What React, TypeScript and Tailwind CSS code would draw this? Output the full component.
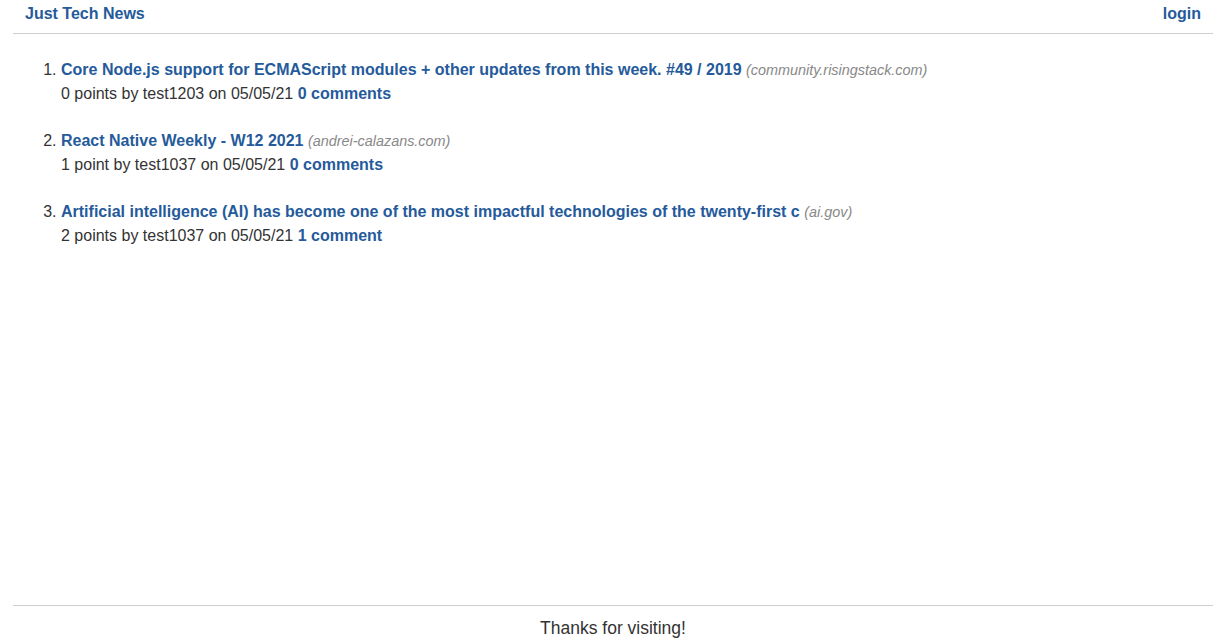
import React from 'react';

type Post = {
    title: string;
    domain: string;
    points: number;
    user: string;
    date: string;
    comments: number;
};

const posts: Post[] = [
    {
        title: 'Core Node.js support for ECMAScript modules + other updates from this week. #49 / 2019',
        domain: 'community.risingstack.com',
        points: 0,
        user: 'test1203',
        date: '05/05/21',
        comments: 0,
    },
    {
        title: 'React Native Weekly - W12 2021',
        domain: 'andrei-calazans.com',
        points: 1,
        user: 'test1037',
        date: '05/05/21',
        comments: 0,
    },
    {
        title: 'Artificial intelligence (AI) has become one of the most impactful technologies of the twenty-first c',
        domain: 'ai.gov',
        points: 2,
        user: 'test1037',
        date: '05/05/21',
        comments: 1,
    },
];

export default function App() {
    return (
        <div className="min-h-screen flex flex-col bg-white text-[#333] font-['Liberation_Sans',Arial,sans-serif] text-[16px]">
            <header className="ml-[13px] w-[1200px] h-[34px] border-b border-[#cfcfcf] flex justify-between px-3 pt-[5px]">
                <a href="#" className="font-bold text-[#255a9b] leading-[18px]">Just Tech News</a>
                <a href="#" className="font-bold text-[#255a9b] leading-[18px]">login</a>
            </header>

            <main className="flex-1 ml-[13px] w-[1200px]">
                <ol className="list-decimal pl-[48px] mt-[24px] flex flex-col gap-[23px]">
                    {posts.map((post, i) => (
                        <li key={i} className="leading-[24px]">
                            <a href="#" className="font-bold text-[#255a9b]">{post.title}</a>{' '}
                            <span className="italic text-[14.4px] text-[#888]">({post.domain})</span>
                            <div>
                                {post.points} {post.points === 1 ? 'point' : 'points'} by {post.user} on {post.date}{' '}
                                <a href="#" className="font-bold text-[#255a9b]">
                                    {post.comments} {post.comments === 1 ? 'comment' : 'comments'}
                                </a>
                            </div>
                        </li>
                    ))}
                </ol>
            </main>

            <footer className="ml-[13px] w-[1200px] h-[38px] border-t border-[#cfcfcf] text-center text-[17.5px] leading-[27px] pt-[9px]">
                Thanks for visiting!
            </footer>
        </div>
    );
}
